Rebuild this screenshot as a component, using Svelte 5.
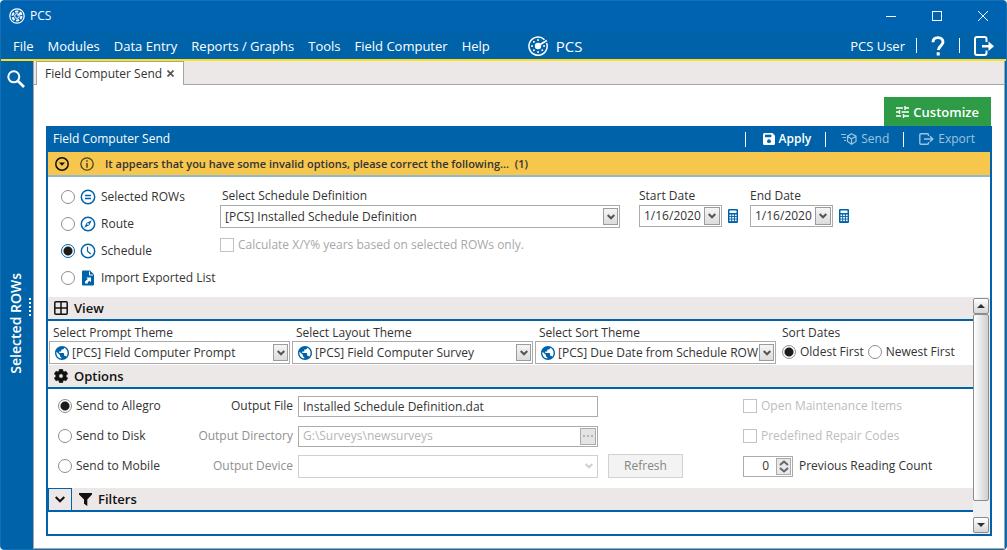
<script>
	const menus = ['File', 'Modules', 'Data Entry', 'Reports / Graphs', 'Tools', 'Field Computer', 'Help'];

	const sources = [
		{ id: 'rows', label: 'Selected ROWs' },
		{ id: 'route', label: 'Route' },
		{ id: 'schedule', label: 'Schedule' },
		{ id: 'import', label: 'Import Exported List' }
	];

	const themes = [
		{ id: 'prompt', label: 'Select Prompt Theme', value: '[PCS] Field Computer Prompt' },
		{ id: 'layout', label: 'Select Layout Theme', value: '[PCS] Field Computer Survey' },
		{ id: 'sort', label: 'Select Sort Theme', value: '[PCS] Due Date from Schedule ROW' }
	];

	let source = $state('schedule');
	let sortDates = $state('oldest');
	let target = $state('allegro');
	let startDate = $state('1/16/2020');
	let endDate = $state('1/16/2020');
	let outputFile = $state('Installed Schedule Definition.dat');
	let readingCount = $state(0);
</script>

{#snippet chevron()}
	<svg width="8" height="6" viewBox="0 0 8 6" fill="none" stroke="currentColor" stroke-width="2">
		<path d="M0.7 1 L4 4.3 L7.3 1" />
	</svg>
{/snippet}

{#snippet globe()}
	<svg class="globe" width="14" height="14" viewBox="2 2 20 20" fill="#0063a9">
		<path
			d="M12 2C6.48 2 2 6.48 2 12s4.480 10 10 10 10-4.480 10-10S17.520 2 12 2zm-1 17.930c-3.950-.490-7-3.850-7-7.930 0-.620.080-1.210.210-1.790L9 15v1c0 1.100.900 2 2 2v1.930zm6.900-2.540c-.260-.810-1-1.390-1.900-1.390h-1v-3c0-.550-.450-1-1-1H8v-2h2c.550 0 1-.450 1-1V7h2c1.100 0 2-.900 2-2v-.410c2.930 1.190 5 4.060 5 7.410 0 2.080-.800 3.970-2.100 5.390z"
		/>
	</svg>
{/snippet}

{#snippet calculator()}
	<svg width="10" height="14" viewBox="0 0 10 14">
		<rect width="10" height="14" rx="1" fill="#0063a9" />
		<rect x="1.500" y="1.500" width="7" height="2.500" fill="#fff" />
		<g fill="#fff">
			{#each [5.5, 8, 10.5] as y}
				{#each [1.500, 4.200, 6.900] as x}
					<rect {x} {y} width="1.700" height="1.600" />
				{/each}
			{/each}
		</g>
	</svg>
{/snippet}

{#snippet sourceIcon(id)}
	<svg width="16" height="16" viewBox="0 0 16 16" fill="none" stroke="#0063a9" stroke-width="1.500">
		{#if id === 'rows'}
			<circle cx="8" cy="8" r="6.700" />
			<path d="M5 6.500h6M5 9.500h6" />
		{:else if id === 'route'}
			<circle cx="8" cy="8" r="6.700" />
			<path d="M11.800 4.200 L9.300 9.300 L4.200 11.800 L6.700 6.700 Z" fill="#0063a9" stroke="none" />
			<circle cx="8" cy="8" r="0.900" fill="#fff" stroke="none" />
		{:else if id === 'schedule'}
			<circle cx="8" cy="8" r="6.700" />
			<path d="M7.500 3.800V8.300L10.800 11" stroke-width="1.200" />
		{:else}
			<path d="M2 1.500Q2 .5 3 .5H10L14 4.500V14.500Q14 15.500 13 15.500H3Q2 15.500 2 14.500Z" fill="#0063a9" stroke="none" />
			<path d="M9.500 1.500V5H13" stroke="#fff" stroke-width="1" />
			<path d="M6.200 7.500H11V12.300L9.400 10.700L7.800 12.300V13.500H5V11.500L7.800 9.100Z" fill="#fff" stroke="none" />
		{/if}
	</svg>
{/snippet}

<div class="window">
	<header class="titlebar">
		<svg width="16" height="16" viewBox="0 0 16 16" fill="none" stroke="#fff">
			<circle cx="8" cy="8" r="7.200" stroke-width="1.200" />
			<circle cx="8" cy="8" r="4.500" stroke-width="2" stroke-dasharray="3.200 1.500" />
			<circle cx="8" cy="8" r="2.300" stroke-width="1" />
			<path d="M8.500 7.500 L12.500 4.500" stroke-width="1.300" />
		</svg>
		<span class="app-name">PCS</span>
		<button aria-label="Minimize">
			<svg width="10" height="10" viewBox="0 0 10 10" stroke="#fff"><path d="M0 5.500H10" /></svg>
		</button>
		<button aria-label="Maximize">
			<svg width="10" height="10" viewBox="0 0 10 10" stroke="#fff" fill="none">
				<rect x=".5" y=".5" width="9" height="9" />
			</svg>
		</button>
		<button aria-label="Close">
			<svg width="10" height="10" viewBox="0 0 10 10" stroke="#fff"><path d="M0 0L10 10M10 0L0 10" /></svg>
		</button>
	</header>

	<nav class="menubar">
		{#each menus as menu}
			<button>{menu}</button>
		{/each}
		<div class="brand">
			<svg width="20" height="20" viewBox="0 0 20 20" fill="none" stroke="#fff">
				<path d="M16.500 3.700A9.100 9.100 0 1 0 18.600 7" stroke-width="1.500" />
				<circle cx="10" cy="10" r="3.200" fill="#fff" stroke="none" />
				<path d="M11 9.300 L18.800 4.500" stroke-width="1.700" />
				<g fill="#fff" stroke="none">
					<rect x="9.200" y="3.200" width="1.700" height="1.700" />
					<rect x="9.200" y="15.200" width="1.700" height="1.700" />
					<rect x="3.200" y="9.200" width="1.700" height="1.700" />
					<rect x="15.200" y="9.200" width="1.700" height="1.700" />
					<rect x="5" y="5" width="1.700" height="1.700" />
					<rect x="5" y="13.400" width="1.700" height="1.700" />
					<rect x="13.400" y="13.400" width="1.700" height="1.700" />
				</g>
			</svg>
			<span>PCS</span>
		</div>
		<span class="user">PCS User</span>
		<span class="divider"></span>
		<button class="tool" aria-label="Help">
			<svg width="14" height="20" viewBox="0 0 14 20">
				<path d="M2 6.300C2 3.200 4.100 1.600 7 1.600s5 1.700 5 4.400c0 3.700-4.600 4-4.600 8" fill="none" stroke="#fff" stroke-width="2.900" />
				<rect x="5.700" y="16.300" width="3" height="3.200" fill="#fff" />
			</svg>
		</button>
		<span class="divider"></span>
		<button class="tool" aria-label="Log out">
			<svg width="20" height="20" viewBox="0 0 20 20" fill="none" stroke="#fff" stroke-width="2">
				<path d="M12.500 6V3Q12.500 1 10.500 1H3Q1 1 1 3V17Q1 19 3 19H10.500Q12.500 19 12.500 17V14.500" />
				<path d="M8 10.300H16" stroke-width="2.500" />
				<path d="M14.500 5.500L20 10.300L14.500 15Z" fill="#fff" stroke="none" />
			</svg>
		</button>
	</nav>

	<div class="workspace">
		<aside class="sidebar">
			<button class="search" aria-label="Search">
				<svg width="18" height="18" viewBox="0 0 18 18" fill="none" stroke="#fff">
					<circle cx="6.800" cy="6.800" r="5.500" stroke-width="2" />
					<path d="M11 11L17 17" stroke-width="2.600" />
				</svg>
			</button>
			<span class="side-label">Selected ROWs</span>
			<span class="grip"></span>
		</aside>

		<div class="content">
			<div class="tabs">
				<div class="tab">
					<span>Field Computer Send</span>
					<button aria-label="Close tab">
						<svg width="7" height="7" viewBox="0 0 7 7" stroke="#555" stroke-width="1.700">
							<path d="M.5 .5L6.500 6.500M6.500 .5L.5 6.500" />
						</svg>
					</button>
				</div>
			</div>

			<main>
				<button class="customize">
					<svg width="13" height="12" viewBox="0 0 13 12" stroke="#fff" stroke-width="1.400">
						<path d="M0 2H7M9.500 2H13M9 0V4M0 6H3M5.500 6H13M3.500 4V8M0 10H5M7.500 10H13M7.500 8V12" />
					</svg>
					Customize
				</button>

				<section class="panel">
					<div class="panel-head">
						<h1>Field Computer Send</h1>
						<span class="divider"></span>
						<button class="action apply">
							<svg width="12" height="12" viewBox="0 0 12 12">
								<path d="M1.500 0H9.500L12 2.500V10.500Q12 12 10.500 12H1.500Q0 12 0 10.500V1.500Q0 0 1.500 0Z" fill="#fff" />
								<rect x="2" y="1.700" width="6.300" height="2.500" fill="#0063a9" />
								<circle cx="6" cy="8.200" r="1.900" fill="#0063a9" />
							</svg>
							Apply
						</button>
						<span class="divider"></span>
						<button class="action" disabled>
							<svg width="16" height="12" viewBox="0 0 16 12" fill="none" stroke="currentColor" stroke-width="1.200">
								<path d="M0 1.500H5M1.500 4.500H5M3 7.500H5" />
								<path d="M10.500 .8L15 3.200V8.500L10.500 11.200L6.500 8.500V3.200ZM6.500 3.400L10.500 5.800L15 3.400M10.500 5.800V11" />
							</svg>
							Send
						</button>
						<span class="divider"></span>
						<button class="action export" disabled>
							<svg width="15" height="12" viewBox="0 0 15 12" fill="none" stroke="currentColor" stroke-width="1.400">
								<path d="M9.500 3V2Q9.500 .8 8.500 .8H2Q.8 .8 .8 2V10Q.8 11.200 2 11.200H8.500Q9.500 11.200 9.500 10V9" />
								<path d="M5 6H13.500M11 3.300L13.800 6L11 8.700" />
							</svg>
							Export
						</button>
					</div>

					<div class="warning">
						<button aria-label="Show details">
							<svg width="14" height="14" viewBox="0 0 14 14">
								<circle cx="7" cy="7" r="6.200" fill="none" stroke="#111" stroke-width="1.500" />
								<path d="M4 5.500H10L7 8.700Z" fill="#111" />
							</svg>
						</button>
						<svg width="14" height="14" viewBox="0 0 14 14" fill="none" stroke="#4c4020">
							<circle cx="7" cy="7" r="6.200" stroke-width="1.300" />
							<path d="M7 3.200V4.700M7 6V10.800" stroke-width="1.500" />
						</svg>
						<span>It appears that you have some invalid options, please correct the following... &nbsp;(1)</span>
					</div>

					<div class="source-form">
						<div class="sources">
							{#each sources as item}
								<label>
									<input type="radio" name="source" value={item.id} bind:group={source} />
									{@render sourceIcon(item.id)}
									{item.label}
								</label>
							{/each}
						</div>

						<div class="definition">
							<label for="definition">Select Schedule Definition</label>
							<div class="combo">
								<select id="definition"><option>[PCS] Installed Schedule Definition</option></select>
								<span class="arrow">{@render chevron()}</span>
							</div>
							<label class="check">
								<input type="checkbox" disabled />
								Calculate X/Y% years based on selected ROWs only.
							</label>
						</div>

						<div class="date">
							<label for="start">Start Date</label>
							<div class="date-row">
								<div class="date-box">
									<input id="start" type="text" bind:value={startDate} />
									<button aria-label="Pick start date">{@render chevron()}</button>
								</div>
								<button class="calc" aria-label="Calculate start date">{@render calculator()}</button>
							</div>
						</div>
						<div class="date">
							<label for="end">End Date</label>
							<div class="date-row">
								<div class="date-box">
									<input id="end" type="text" bind:value={endDate} />
									<button aria-label="Pick end date">{@render chevron()}</button>
								</div>
								<button class="calc" aria-label="Calculate end date">{@render calculator()}</button>
							</div>
						</div>
					</div>

					<div class="scroll-area">
						<div class="groups">
							<h2>
								<svg width="14" height="14" viewBox="0 0 14 14" fill="none" stroke="#111" stroke-width="1.500">
									<rect x=".8" y=".8" width="12.400" height="12.400" rx="1" />
									<path d="M7 1V13M1 7H13" />
								</svg>
								View
							</h2>
							<div class="themes">
								{#each themes as theme}
									<div class="theme">
										<label for={theme.id}>{theme.label}</label>
										<div class="combo with-icon">
											{@render globe()}
											<select id={theme.id}><option>{theme.value}</option></select>
											<span class="arrow">{@render chevron()}</span>
										</div>
									</div>
								{/each}
								<div class="sort-dates">
									<span>Sort Dates</span>
									<div class="sort-row">
										<label>
											<input type="radio" name="sortDates" value="oldest" bind:group={sortDates} />
											Oldest First
										</label>
										<label>
											<input type="radio" name="sortDates" value="newest" bind:group={sortDates} />
											Newest First
										</label>
									</div>
								</div>
							</div>

							<h2>
								<svg width="14" height="14" viewBox="2 2 20 20" fill="#111">
									<path
										d="M19.140 12.940c.040-.300.060-.610.060-.940s-.020-.640-.070-.940l2.030-1.580a.5.5 0 0 0 .120-.610l-1.920-3.320a.5.5 0 0 0-.590-.220l-2.390.960c-.500-.380-1.030-.700-1.620-.940L14.400 2.810a.5.5 0 0 0-.480-.410h-3.840a.5.5 0 0 0-.470.410L9.250 5.350c-.590.240-1.130.570-1.620.940l-2.390-.960a.5.5 0 0 0-.590.220L2.740 8.870a.5.5 0 0 0 .120.610l2.030 1.580c-.050.300-.090.630-.090.940s.020.640.070.940l-2.030 1.580a.5.5 0 0 0-.120.610l1.920 3.320c.120.220.370.290.590.220l2.390-.960c.500.380 1.030.700 1.620.940l.360 2.540c.050.240.240.410.480.410h3.840c.240 0 .440-.170.470-.410l.360-2.540c.590-.240 1.130-.560 1.620-.940l2.390.960c.220.080.470 0 .590-.220l1.920-3.320a.5.5 0 0 0-.120-.610zM12 15.200a3.200 3.200 0 1 1 0-6.400 3.200 3.200 0 0 1 0 6.400z"
										stroke="#111"
									/>
								</svg>
								Options
							</h2>
							<div class="options">
								<label>
									<input type="radio" name="target" value="allegro" bind:group={target} />
									Send to Allegro
								</label>
								<label class="caption" for="file">Output File</label>
								<input class="text" id="file" type="text" bind:value={outputFile} />
								<label class="check wide">
									<input type="checkbox" disabled />
									Open Maintenance Items
								</label>

								<label>
									<input type="radio" name="target" value="disk" bind:group={target} />
									Send to Disk
								</label>
								<label class="caption off" for="directory">Output Directory</label>
								<div class="browse">
									<input id="directory" type="text" value="G:\Surveys\newsurveys" disabled />
									<button aria-label="Browse" disabled><i></i><i></i><i></i></button>
								</div>
								<label class="check wide">
									<input type="checkbox" disabled />
									Predefined Repair Codes
								</label>

								<label>
									<input type="radio" name="target" value="mobile" bind:group={target} />
									Send to Mobile
								</label>
								<label class="caption off" for="device">Output Device</label>
								<div class="combo disabled">
									<select id="device" disabled><option></option></select>
									<span class="arrow">{@render chevron()}</span>
								</div>
								<button class="refresh" disabled>Refresh</button>
								<div class="reading">
									<div class="spinner">
										<input id="count" type="text" inputmode="numeric" bind:value={readingCount} />
										<span class="spin">
											<button aria-label="Increase" onclick={() => (readingCount = Number(readingCount) + 1)}>
												<svg width="10" height="6" viewBox="0 0 10 6" fill="none" stroke="#666" stroke-width="2"><path d="M1 5L5 1.500L9 5" /></svg>
											</button>
											<button aria-label="Decrease" onclick={() => (readingCount = Math.max(0, Number(readingCount) - 1))}>
												<svg width="10" height="6" viewBox="0 0 10 6" fill="none" stroke="#666" stroke-width="2"><path d="M1 1L5 4.500L9 1" /></svg>
											</button>
										</span>
									</div>
									<label for="count">Previous Reading Count</label>
								</div>
							</div>

							<h2 class="filters">
								<button aria-label="Expand filters">
									<svg width="10" height="7" viewBox="0 0 10 7" fill="none" stroke="#111" stroke-width="2"><path d="M.7 1L5 5.300L9.300 1" /></svg>
								</button>
								<svg width="13" height="13" viewBox="0 0 13 13" fill="#111">
									<path d="M0 0H13V1.500L8.300 6.500V13L5 10.800V6.500L0 1.500Z" />
								</svg>
								Filters
							</h2>
						</div>

						<div class="scrollbar">
							<button aria-label="Scroll up">
								<svg width="8" height="4" viewBox="0 0 8 4" fill="#333"><path d="M0 4L4 0L8 4Z" /></svg>
							</button>
							<span class="track"><span class="thumb"></span></span>
							<button aria-label="Scroll down">
								<svg width="8" height="4" viewBox="0 0 8 4" fill="#333"><path d="M0 0L4 4L8 0Z" /></svg>
							</button>
						</div>
					</div>
				</section>
			</main>
		</div>
	</div>
</div>

<style>
	:global(body) {
		margin: 0;
		background: #fff;
	}

	.window {
		--blue: #0063a9;
		box-sizing: border-box;
		display: flex;
		flex-direction: column;
		min-height: 100vh;
		border: 1px solid #1670b5;
		border-radius: 4px;
		overflow: hidden;
		background: var(--blue);
		color: #333;
		font: 12px/16px 'Open Sans', 'Noto Sans', sans-serif;
	}

	.window :global(svg) {
		display: block;
		flex: none;
	}

	button,
	input,
	select {
		box-sizing: border-box;
		margin: 0;
		padding: 0;
		border: 0;
		background: none;
		color: inherit;
		font: inherit;
		outline: none;
	}

	button {
		display: flex;
		align-items: center;
		justify-content: center;
	}

	h1,
	h2 {
		margin: 0;
	}

	label {
		white-space: nowrap;
	}

	/* title bar and menu */
	.titlebar {
		display: flex;
		align-items: center;
		height: 30px;
		padding-left: 8px;
		background: #0063b1;
		color: #fff;
	}

	.titlebar button {
		width: 46px;
		height: 30px;
	}

	.app-name {
		flex: 1;
		padding-left: 5px;
	}

	.menubar {
		display: flex;
		align-items: center;
		gap: 14px;
		box-sizing: border-box;
		height: 30px;
		padding: 1px 12px 0;
		border-bottom: 2px solid #ffdf1a;
		color: #fff;
		font-size: 13px;
		white-space: nowrap;
	}

	.brand {
		display: flex;
		flex: 1;
		align-items: center;
		gap: 8px;
		padding-left: 24px;
		font-size: 15px;
	}

	.divider {
		width: 1px;
		height: 15px;
		background: #fff;
	}

	.menubar .user {
		margin-right: -3px;
	}

	/* work area */
	.workspace {
		display: flex;
		flex: 1;
	}

	.sidebar {
		position: relative;
		display: flex;
		flex: none;
		flex-direction: column;
		align-items: center;
		box-sizing: border-box;
		width: 32px;
		padding-right: 2px;
		color: #fff;
	}

	.search {
		width: 30px;
		height: 36px;
	}

	.side-label {
		margin: auto 0;
		font-size: 14px;
		font-weight: 600;
		writing-mode: vertical-rl;
		transform: rotate(180deg);
	}

	.grip {
		position: absolute;
		top: calc(50% - 7px);
		right: 2px;
		height: 18px;
		border-right: 2px dotted #fff;
	}

	.content {
		display: flex;
		flex: 1;
		flex-direction: column;
		min-width: 0;
		margin-right: 1px;
		border: 1px solid #a5a5a5;
		border-top: 0;
		background: #fff;
	}

	.tabs {
		display: flex;
		height: 23px;
		padding-left: 2px;
		border-bottom: 1px solid #a5a5a5;
		background: #ebe8e7;
	}

	.tab {
		display: flex;
		align-items: center;
		gap: 5px;
		height: 24px;
		padding: 0 9px 0 8px;
		border: 1px solid #a5a5a5;
		border-bottom: 0;
		box-sizing: border-box;
		background: #fff;
	}

	main {
		display: flex;
		flex: 1;
		flex-direction: column;
		padding: 12px;
	}

	.customize {
		align-self: flex-end;
		gap: 4px;
		height: 29px;
		padding: 0 12px;
		margin-right: 1px;
		background: #2e9b47;
		color: #fff;
		font-size: 13px;
		font-weight: 600;
	}

	.panel {
		display: flex;
		flex: 1;
		flex-direction: column;
		border: 2px solid var(--blue);
		border-top: 0;
	}

	.panel-head {
		display: flex;
		align-items: center;
		height: 26px;
		padding: 0 15px 0 5px;
		background: var(--blue);
		color: #fff;
	}

	h1 {
		flex: 1;
		font-size: 12px;
		font-weight: 400;
	}

	.action {
		gap: 4px;
		padding: 0 14px 0 15px;
	}

	.action:disabled {
		color: #9fc3df;
	}

	.apply {
		padding-left: 17px;
		font-weight: 600;
	}

	.export {
		padding-right: 0;
	}

	.warning {
		display: flex;
		align-items: center;
		gap: 11px;
		height: 23px;
		padding-left: 7px;
		border-bottom: 2px solid #8fb9cf;
		background: #f7c64c;
		font-size: 11px;
		font-weight: 600;
	}

	/* radios and tick boxes */
	input[type='radio'] {
		flex: none;
		width: 14px;
		height: 14px;
		border: 1px solid #8e8e8e;
		border-radius: 50%;
		background: #fff;
		appearance: none;
	}

	input[type='radio']:checked {
		background: radial-gradient(circle, #1c1c1c 4px, #fff 5px);
	}

	input[type='checkbox'] {
		flex: none;
		width: 14px;
		height: 14px;
		border: 1px solid #c3c3c3;
		background: #fff;
		appearance: none;
	}

	.check {
		display: flex;
		align-items: center;
		gap: 4px;
		color: #a8a8a8;
	}

	/* boxes */
	.combo {
		position: relative;
		display: flex;
		align-items: center;
		box-sizing: border-box;
		height: 23px;
		border: 1px solid #ababab;
		background: #fff;
	}

	.combo select {
		flex: 1;
		min-width: 0;
		height: 21px;
		padding: 0 16px 0 4px;
		appearance: none;
	}

	.with-icon {
		padding-left: 5px;
	}

	.with-icon select {
		padding-left: 3px;
	}

	.arrow {
		position: absolute;
		top: 2px;
		right: 1px;
		bottom: 2px;
		display: flex;
		align-items: center;
		justify-content: center;
		box-sizing: border-box;
		width: 15px;
		border: 1px solid #9c9c9c;
		background: linear-gradient(#f5f5f5, #dcdcdc);
		color: #555;
		pointer-events: none;
	}

	.combo.disabled {
		border-color: #d0d0d0;
	}

	.disabled .arrow {
		border: 0;
		background: none;
		color: #cfcfcf;
	}

	/* source form */
	.source-form {
		display: flex;
		height: 108px;
		padding: 6px 0;
	}

	.sources {
		width: 172px;
	}

	.sources label {
		display: flex;
		align-items: center;
		gap: 5px;
		height: 27px;
		padding-left: 13px;
	}

	.sources input:checked {
		border-color: var(--blue);
	}

	.definition,
	.date {
		display: flex;
		flex-direction: column;
		padding-top: 5px;
	}

	.definition {
		width: 400px;
		margin-right: 19px;
	}

	.definition > label:first-child {
		padding-left: 2px;
	}

	.definition .combo,
	.date-row {
		margin-top: 1px;
	}

	.definition .check {
		margin-top: 9px;
	}

	.date {
		width: 111px;
	}

	.date-row {
		display: flex;
		align-items: center;
		gap: 6px;
	}

	.date-box {
		display: flex;
		align-items: center;
		box-sizing: border-box;
		width: 83px;
		height: 22px;
		padding-right: 1px;
		border: 1px solid #ababab;
	}

	.date-box input {
		flex: 1;
		min-width: 0;
		padding-left: 4px;
	}

	.date-box button {
		width: 16px;
		height: 18px;
		border: 1px solid #9c9c9c;
		background: linear-gradient(#f5f5f5, #dcdcdc);
		color: #555;
	}

	/* collapsible groups */
	.scroll-area {
		display: flex;
		flex: 1;
	}

	.groups {
		flex: 1;
		min-width: 0;
	}

	h2 {
		display: flex;
		align-items: center;
		gap: 6px;
		height: 22px;
		padding-left: 6px;
		border-bottom: 2px solid var(--blue);
		background: #ebe8e7;
		color: #111;
		font-size: 13px;
		font-weight: 600;
	}

	.themes {
		display: flex;
		gap: 2px;
		padding: 4px 0 1px 1px;
	}

	.theme {
		width: 241px;
	}

	.theme > label,
	.sort-dates > span {
		display: block;
		padding-left: 4px;
	}

	.sort-dates > span {
		padding-bottom: 3px;
	}

	.sort-row {
		display: flex;
		gap: 4px;
		padding-left: 4px;
	}

	.sort-row label,
	.options label:not(.caption) {
		display: flex;
		align-items: center;
		gap: 4px;
	}

	.options {
		display: grid;
		grid-template-columns: 130px 110px 300px 75px 1fr;
		grid-auto-rows: 30px;
		align-items: center;
		padding: 2px 0 7px 10px;
	}

	.options .caption {
		padding-right: 5px;
		text-align: right;
	}

	.options .off {
		color: #8f8f8f;
	}

	.options .text,
	.browse {
		box-sizing: border-box;
		height: 21px;
		border: 1px solid #ababab;
		padding-left: 4px;
	}

	.browse {
		display: flex;
		align-items: center;
		padding-right: 1px;
		color: #b5b5b5;
	}

	.browse input {
		flex: 1;
	}

	.browse button {
		gap: 2px;
		width: 16px;
		height: 17px;
		border: 1px solid #ababab;
		background: #e4e4e4;
	}

	.browse i {
		width: 2px;
		height: 2px;
		background: #b5b5b5;
	}

	.options .wide {
		grid-column: 4 / 6;
		padding-left: 145px;
		color: #bdbdbd;
	}

	.refresh {
		width: 75px;
		height: 24px;
		margin-left: 10px;
		border: 1px solid #d2d2d2;
		background: #f3f3f3;
		color: #858585;
	}

	.reading {
		display: flex;
		align-items: center;
		gap: 6px;
		padding-left: 70px;
	}

	.spinner {
		display: flex;
		align-items: center;
		box-sizing: border-box;
		width: 50px;
		height: 21px;
		padding-right: 1px;
		border: 1px solid #ababab;
	}

	.spinner input {
		flex: 1;
		min-width: 0;
		padding-right: 7px;
		text-align: right;
	}

	.spin {
		display: flex;
		flex-direction: column;
		justify-content: center;
		gap: 1px;
		box-sizing: border-box;
		width: 15px;
		height: 17px;
		border: 1px solid #ababab;
		background: #e8e8e8;
	}

	.filters {
		padding-left: 0;
	}

	.filters button {
		align-self: stretch;
		width: 24px;
		margin-right: 1px;
		border: 1px solid var(--blue);
		border-bottom: 0;
	}

	/* scroll bar */
	.scrollbar {
		display: flex;
		flex-direction: column;
		padding: 1px 1px 1px 0;
		background: #f0f0f0;
	}

	.scrollbar button {
		width: 16px;
		height: 16px;
		border: 1px solid #8c8c8c;
		border-radius: 2px;
		background: linear-gradient(#fff, #d5d5d5);
	}

	.track {
		flex: 1;
	}

	.thumb {
		display: block;
		box-sizing: border-box;
		width: 16px;
		height: 92%;
		border: 1px solid #8c8c8c;
		border-radius: 2px;
		background: linear-gradient(90deg, #fff, #cfcfcf);
	}
</style>
